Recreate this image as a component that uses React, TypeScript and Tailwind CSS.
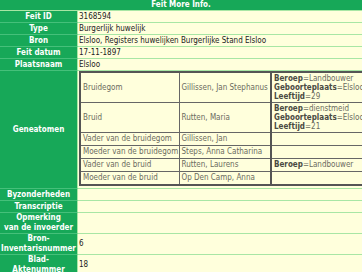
const LABEL =
  'border-r border-b border-r-[#a8e6a4] border-b-[#45c07a] bg-[#17a858] p-0 text-center align-middle text-[8px] font-bold leading-[10px] text-white'
const VALUE =
  'border-b border-[#a8e6a4] bg-[#ffffdc] py-0 pl-[1px] align-middle text-[8px] leading-[10px] text-[#222]'

const simple: [string, string][] = [
  ['Feit ID', '3168594'],
  ['Type', 'Burgerlijk huwelijk'],
  ['Bron', 'Elsloo, Registers huwelijken Burgerlijke Stand Elsloo'],
  ['Feit datum', '17-11-1897'],
  ['Plaatsnaam', 'Elsloo']
]

type Attr = [string, string]
const persons: { role: string; name: string; attrs: Attr[] }[] = [
  {
    role: 'Bruidegom',
    name: 'Gillissen, Jan Stephanus',
    attrs: [
      ['Beroep', 'Landbouwer'],
      ['Geboorteplaats', 'Elsloo'],
      ['Leeftijd', '29']
    ]
  },
  {
    role: 'Bruid',
    name: 'Rutten, Maria',
    attrs: [
      ['Beroep', 'dienstmeid'],
      ['Geboorteplaats', 'Elsloo'],
      ['Leeftijd', '21']
    ]
  },
  { role: 'Vader van de bruidegom', name: 'Gillissen, Jan', attrs: [] },
  { role: 'Moeder van de bruidegom', name: 'Steps, Anna Catharina', attrs: [] },
  { role: 'Vader van de bruid', name: 'Rutten, Laurens', attrs: [['Beroep', 'Landbouwer']] },
  { role: 'Moeder van de bruid', name: 'Op Den Camp, Anna', attrs: [] }
]

const after: [string[], string][] = [
  [['Byzonderheden'], ''],
  [['Transcriptie'], ''],
  [['Opmerking', 'van de invoerder'], ''],
  [['Bron-', 'Inventarisnummer'], '6'],
  [['Blad-', 'Aktenummer'], '18']
]

function Geneatomen() {
  return (
    <table className="w-[330px] table-fixed border-collapse border-2 border-[#555] text-[8px] text-[#6b6b60]">
      <tbody>
        {persons.map((p) => {
          const tall = p.attrs.length > 1
          const cell = tall
            ? 'border border-[#666] px-[2px] py-[1px] align-middle leading-[9px]'
            : 'border border-[#666] px-[2px] py-0 align-middle leading-[12px]'
          return (
            <tr key={p.role}>
              <td className={`w-[99px] whitespace-nowrap ${cell}`}>{p.role}</td>
              <td className={`w-[92px] whitespace-nowrap ${cell}`}>{p.name}</td>
              <td className={`border-l-2 border-l-[#555] whitespace-nowrap ${cell}`}>
                {p.attrs.map(([k, v]) => (
                  <div key={k}>
                    <b className="text-[#4a4a42]">{k}</b>={v}
                  </div>
                ))}
              </td>
            </tr>
          )
        })}
      </tbody>
    </table>
  )
}

export default function App() {
  return (
    <div className="h-[272px] w-[362px] overflow-hidden bg-[#ffffdc] font-['DejaVu_Sans_Condensed','Liberation_Sans',sans-serif]">
      <table className="w-[362px] table-fixed border-separate border-spacing-0">
        <colgroup>
          <col className="w-[78px]" />
          <col />
        </colgroup>
        <tbody>
          <tr>
            <th
              colSpan={2}
              className="h-[11px] border-b border-[#a8e6a4] bg-[#17a858] p-0 text-center align-middle text-[8px] font-bold leading-[10px] text-white"
            >
              Feit More Info.
            </th>
          </tr>
          {simple.map(([label, value]) => (
            <tr key={label}>
              <td className={`h-[12px] ${LABEL}`}>{label}</td>
              <td className={`h-[12px] whitespace-nowrap ${VALUE}`}>{value}</td>
            </tr>
          ))}
          <tr>
            <td className={LABEL}>Geneatomen</td>
            <td className={`pb-[2px] ${VALUE}`}>
              <Geneatomen />
            </td>
          </tr>
          {after.map(([lines, value]) => (
            <tr key={lines.join()}>
              <td className={`h-[12px] ${LABEL}`}>
                {lines.map((l) => (
                  <div key={l}>{l}</div>
                ))}
              </td>
              <td className={VALUE}>{value}</td>
            </tr>
          ))}
        </tbody>
      </table>
    </div>
  )
}
